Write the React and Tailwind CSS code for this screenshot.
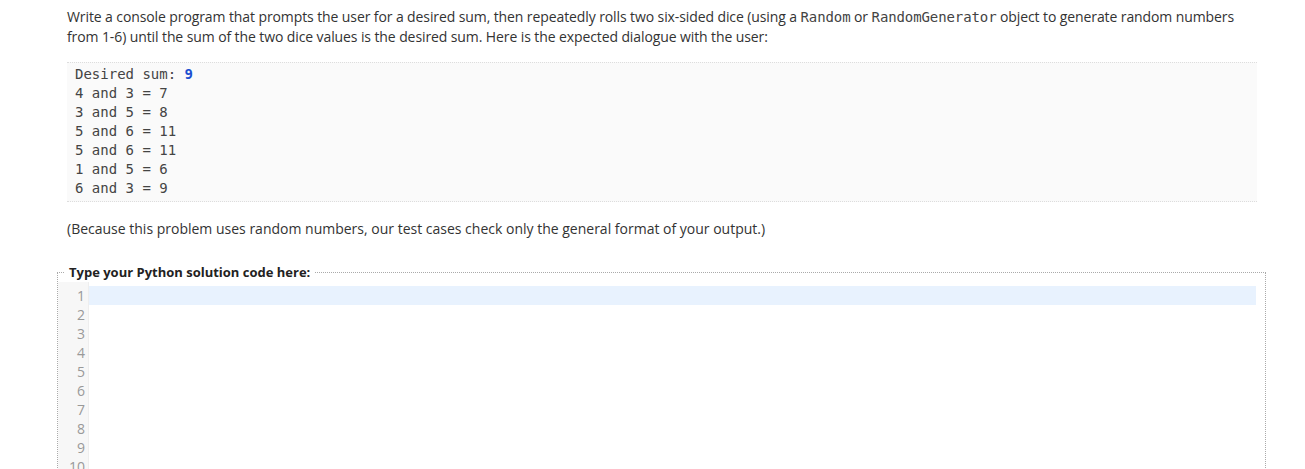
const lines = [
  ["4 and 3 = 7"],
  ["3 and 5 = 8"],
  ["5 and 6 = 11"],
  ["5 and 6 = 11"],
  ["1 and 5 = 6"],
  ["6 and 3 = 9"],
];

const rows = [1, 2, 3, 4, 5, 6, 7, 8, 9, 10];

const mono = "font-['DejaVu_Sans_Mono','Liberation_Mono',monospace]";

export default function App() {
  return (
    <div className="min-h-screen bg-white text-[#333] font-['Open_Sans',sans-serif] text-[14px] leading-[19px] pl-[67px] pr-[48px] pt-[7px]">
      <p className="tracking-[-0.1px]">
        Write a console program that prompts the user for a desired sum, then repeatedly rolls two six-sided dice (using a{" "}
        <code className={`${mono} text-[14px] text-[#444]`}>Random</code> or{" "}
        <code className={`${mono} text-[14px] text-[#444]`}>RandomGenerator</code> object to generate random numbers from 1-6) until the sum of the two dice values is the desired sum. Here is the expected dialogue with the user:
      </p>

      <pre className={`${mono} mt-[16px] bg-[#fafafa] border-y border-dotted border-[#ddd] pl-[8px] pt-[2px] pb-[3px] text-[14px] leading-[19px] text-[#444]`}>
        <div>
          Desired sum: <span className="text-[#1a4fd0] font-bold">9</span>
        </div>
        {lines.map((l, i) => (
          <div key={i}>{l[0]}</div>
        ))}
      </pre>

      <p className="mt-[17px]">
        (Because this problem uses random numbers, our test cases check only the general format of your output.)
      </p>

      <fieldset className="mt-[25px] -ml-[10px] -mr-[9px] border border-dotted border-[#aaa] border-b-0 p-0">
        <legend className="ml-[6px] px-[5px] font-bold text-[13px] text-[#222]">Type your Python solution code here:</legend>
        <div className="flex pt-[4px] bg-white">
          <div className="w-[31px] bg-[#f7f7f7] border-r border-[#eee] -mt-[4px] pt-[4px] text-right pr-[3px] text-[#999] text-[14px]">
            {rows.map((n) => (
              <div key={n} className="h-[19px] leading-[19px]">
                {n}
              </div>
            ))}
          </div>
          <div className="flex-1 mr-[9px]">
            <div className="h-[19px] bg-[#e8f2fe]"></div>
          </div>
        </div>
      </fieldset>
    </div>
  );
}
